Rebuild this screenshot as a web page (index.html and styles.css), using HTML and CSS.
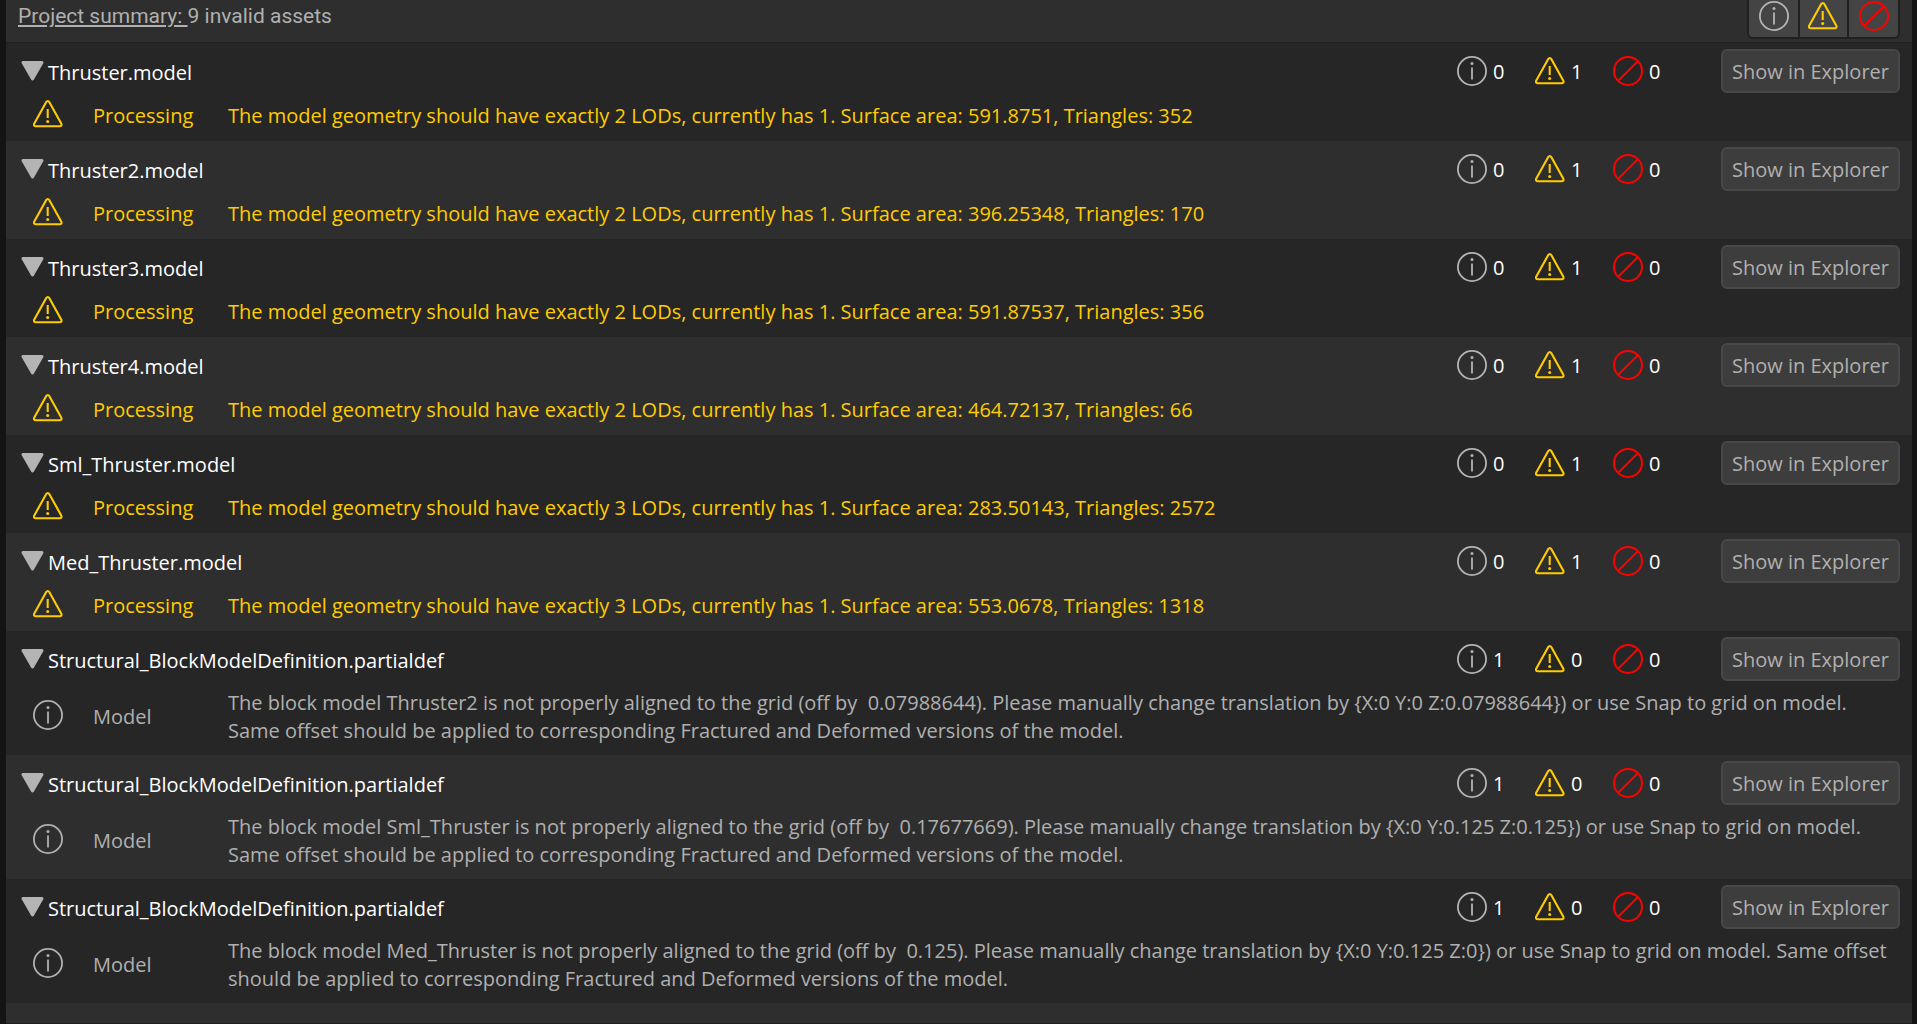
FILE: index.html
```html
<!DOCTYPE html>
<html lang="en">
<head>
<meta charset="utf-8">
<title>Project summary</title>
<link rel="stylesheet" href="styles.css">
</head>
<body>
<svg class="sprite" aria-hidden="true">
  <symbol id="info" viewBox="0 0 30 30">
    <circle cx="15" cy="15" r="14.1" fill="none" stroke="currentColor" stroke-width="1.8"/>
    <circle cx="15" cy="7.5" r="1.5" fill="currentColor"/>
    <path d="M15 11.5v12" fill="none" stroke="currentColor" stroke-width="1.8"/>
  </symbol>
  <symbol id="warn" viewBox="0 0 30 30">
    <path d="M13.1 3.2 1.3 24.4q-1.2 2.8 1.7 2.8h23.5q2.9 0 1.7-2.8L16.4 3.2q-1.6-2.3-3.3 0z" fill="none" stroke="currentColor" stroke-width="2.1" stroke-linejoin="round"/>
    <path d="M14.7 10v9" fill="none" stroke="currentColor" stroke-width="2.1"/>
    <circle cx="14.7" cy="22.5" r="1.5" fill="currentColor"/>
  </symbol>
  <symbol id="ban" viewBox="0 0 30 30">
    <circle cx="15" cy="15" r="14" fill="none" stroke="currentColor" stroke-width="2"/>
    <path d="M5 25 25 5" fill="none" stroke="currentColor" stroke-width="2"/>
  </symbol>
  <symbol id="caret" viewBox="0 0 23 20">
    <path d="M2 1.5h19L11.5 18z" fill="currentColor" stroke="currentColor" stroke-width="3" stroke-linejoin="round"/>
  </symbol>
</svg>
<main class="panel">
  <header class="summary">
    <h1 class="summary-text"><u>Project summary: </u>9 invalid assets</h1>
    <div class="filters">
      <button class="filter info" type="button" aria-label="Show information"><svg class="icon"><use href="#info"/></svg></button>
      <button class="filter warn" type="button" aria-label="Show warnings"><svg class="icon"><use href="#warn"/></svg></button>
      <button class="filter ban" type="button" aria-label="Show errors"><svg class="icon"><use href="#ban"/></svg></button>
    </div>
  </header>

  <section class="asset">
    <div class="asset-head">
      <button class="toggle" type="button" aria-expanded="true"><svg class="caret"><use href="#caret"/></svg>Thruster.model</button>
      <div class="counts">
        <span class="count"><svg class="icon info"><use href="#info"/></svg><span class="number">0</span></span>
        <span class="count"><svg class="icon warn"><use href="#warn"/></svg><span class="number">1</span></span>
        <span class="count"><svg class="icon ban"><use href="#ban"/></svg><span class="number">0</span></span>
      </div>
      <button class="explore" type="button">Show in Explorer</button>
    </div>
    <div class="issue warn">
      <svg class="icon"><use href="#warn"/></svg>
      <span class="kind">Processing</span>
      <p class="message">The model geometry should have exactly 2 LODs, currently has 1. Surface area: 591.8751, Triangles: 352</p>
    </div>
  </section>

  <section class="asset">
    <div class="asset-head">
      <button class="toggle" type="button" aria-expanded="true"><svg class="caret"><use href="#caret"/></svg>Thruster2.model</button>
      <div class="counts">
        <span class="count"><svg class="icon info"><use href="#info"/></svg><span class="number">0</span></span>
        <span class="count"><svg class="icon warn"><use href="#warn"/></svg><span class="number">1</span></span>
        <span class="count"><svg class="icon ban"><use href="#ban"/></svg><span class="number">0</span></span>
      </div>
      <button class="explore" type="button">Show in Explorer</button>
    </div>
    <div class="issue warn">
      <svg class="icon"><use href="#warn"/></svg>
      <span class="kind">Processing</span>
      <p class="message">The model geometry should have exactly 2 LODs, currently has 1. Surface area: 396.25348, Triangles: 170</p>
    </div>
  </section>

  <section class="asset">
    <div class="asset-head">
      <button class="toggle" type="button" aria-expanded="true"><svg class="caret"><use href="#caret"/></svg>Thruster3.model</button>
      <div class="counts">
        <span class="count"><svg class="icon info"><use href="#info"/></svg><span class="number">0</span></span>
        <span class="count"><svg class="icon warn"><use href="#warn"/></svg><span class="number">1</span></span>
        <span class="count"><svg class="icon ban"><use href="#ban"/></svg><span class="number">0</span></span>
      </div>
      <button class="explore" type="button">Show in Explorer</button>
    </div>
    <div class="issue warn">
      <svg class="icon"><use href="#warn"/></svg>
      <span class="kind">Processing</span>
      <p class="message">The model geometry should have exactly 2 LODs, currently has 1. Surface area: 591.87537, Triangles: 356</p>
    </div>
  </section>

  <section class="asset">
    <div class="asset-head">
      <button class="toggle" type="button" aria-expanded="true"><svg class="caret"><use href="#caret"/></svg>Thruster4.model</button>
      <div class="counts">
        <span class="count"><svg class="icon info"><use href="#info"/></svg><span class="number">0</span></span>
        <span class="count"><svg class="icon warn"><use href="#warn"/></svg><span class="number">1</span></span>
        <span class="count"><svg class="icon ban"><use href="#ban"/></svg><span class="number">0</span></span>
      </div>
      <button class="explore" type="button">Show in Explorer</button>
    </div>
    <div class="issue warn">
      <svg class="icon"><use href="#warn"/></svg>
      <span class="kind">Processing</span>
      <p class="message">The model geometry should have exactly 2 LODs, currently has 1. Surface area: 464.72137, Triangles: 66</p>
    </div>
  </section>

  <section class="asset">
    <div class="asset-head">
      <button class="toggle" type="button" aria-expanded="true"><svg class="caret"><use href="#caret"/></svg>Sml_Thruster.model</button>
      <div class="counts">
        <span class="count"><svg class="icon info"><use href="#info"/></svg><span class="number">0</span></span>
        <span class="count"><svg class="icon warn"><use href="#warn"/></svg><span class="number">1</span></span>
        <span class="count"><svg class="icon ban"><use href="#ban"/></svg><span class="number">0</span></span>
      </div>
      <button class="explore" type="button">Show in Explorer</button>
    </div>
    <div class="issue warn">
      <svg class="icon"><use href="#warn"/></svg>
      <span class="kind">Processing</span>
      <p class="message">The model geometry should have exactly 3 LODs, currently has 1. Surface area: 283.50143, Triangles: 2572</p>
    </div>
  </section>

  <section class="asset">
    <div class="asset-head">
      <button class="toggle" type="button" aria-expanded="true"><svg class="caret"><use href="#caret"/></svg>Med_Thruster.model</button>
      <div class="counts">
        <span class="count"><svg class="icon info"><use href="#info"/></svg><span class="number">0</span></span>
        <span class="count"><svg class="icon warn"><use href="#warn"/></svg><span class="number">1</span></span>
        <span class="count"><svg class="icon ban"><use href="#ban"/></svg><span class="number">0</span></span>
      </div>
      <button class="explore" type="button">Show in Explorer</button>
    </div>
    <div class="issue warn">
      <svg class="icon"><use href="#warn"/></svg>
      <span class="kind">Processing</span>
      <p class="message">The model geometry should have exactly 3 LODs, currently has 1. Surface area: 553.0678, Triangles: 1318</p>
    </div>
  </section>

  <section class="asset">
    <div class="asset-head">
      <button class="toggle" type="button" aria-expanded="true"><svg class="caret"><use href="#caret"/></svg>Structural_BlockModelDefinition.partialdef</button>
      <div class="counts">
        <span class="count"><svg class="icon info"><use href="#info"/></svg><span class="number">1</span></span>
        <span class="count"><svg class="icon warn"><use href="#warn"/></svg><span class="number">0</span></span>
        <span class="count"><svg class="icon ban"><use href="#ban"/></svg><span class="number">0</span></span>
      </div>
      <button class="explore" type="button">Show in Explorer</button>
    </div>
    <div class="issue info">
      <svg class="icon"><use href="#info"/></svg>
      <span class="kind">Model</span>
      <p class="message">The block model Thruster2 is not properly aligned to the grid (off by &nbsp;0.07988644). Please manually change translation by {X:0 Y:0 Z:0.07988644}) or use Snap to grid on model.<br>Same offset should be applied to corresponding Fractured and Deformed versions of the model.</p>
    </div>
  </section>

  <section class="asset">
    <div class="asset-head">
      <button class="toggle" type="button" aria-expanded="true"><svg class="caret"><use href="#caret"/></svg>Structural_BlockModelDefinition.partialdef</button>
      <div class="counts">
        <span class="count"><svg class="icon info"><use href="#info"/></svg><span class="number">1</span></span>
        <span class="count"><svg class="icon warn"><use href="#warn"/></svg><span class="number">0</span></span>
        <span class="count"><svg class="icon ban"><use href="#ban"/></svg><span class="number">0</span></span>
      </div>
      <button class="explore" type="button">Show in Explorer</button>
    </div>
    <div class="issue info">
      <svg class="icon"><use href="#info"/></svg>
      <span class="kind">Model</span>
      <p class="message">The block model Sml_Thruster is not properly aligned to the grid (off by &nbsp;0.17677669). Please manually change translation by {X:0 Y:0.125 Z:0.125}) or use Snap to grid on model.<br>Same offset should be applied to corresponding Fractured and Deformed versions of the model.</p>
    </div>
  </section>

  <section class="asset">
    <div class="asset-head">
      <button class="toggle" type="button" aria-expanded="true"><svg class="caret"><use href="#caret"/></svg>Structural_BlockModelDefinition.partialdef</button>
      <div class="counts">
        <span class="count"><svg class="icon info"><use href="#info"/></svg><span class="number">1</span></span>
        <span class="count"><svg class="icon warn"><use href="#warn"/></svg><span class="number">0</span></span>
        <span class="count"><svg class="icon ban"><use href="#ban"/></svg><span class="number">0</span></span>
      </div>
      <button class="explore" type="button">Show in Explorer</button>
    </div>
    <div class="issue info">
      <svg class="icon"><use href="#info"/></svg>
      <span class="kind">Model</span>
      <p class="message">The block model Med_Thruster is not properly aligned to the grid (off by &nbsp;0.125). Please manually change translation by {X:0 Y:0.125 Z:0}) or use Snap to grid on model. Same offset<br>should be applied to corresponding Fractured and Deformed versions of the model.</p>
    </div>
  </section>
</main>
</body>
</html>
```
FILE: styles.css
```css
* {
  box-sizing: border-box;
}

body {
  margin: 0;
  padding: 0 5px 0 6px;
  background: #141414;
  color: #b0b0b0;
  font: 20px/28px "Segoe UI", "Open Sans", "Noto Sans", sans-serif;
}

button {
  font: inherit;
  cursor: pointer;
}

.sprite {
  display: none;
}

.panel {
  min-height: 100vh;
  background: #2e2e2e;
  border-bottom: 1px solid #221e20;
}

.info {
  color: #b4b4b4;
}

.warn {
  color: #ffcc00;
}

.ban {
  color: #ff0000;
}

.icon {
  display: block;
  flex: none;
  width: 30px;
  height: 30px;
}

/* Summary bar */
.summary {
  display: flex;
  justify-content: space-between;
  height: 43px;
  padding: 0 12px;
  border-bottom: 1px solid #212121;
}

.summary-text {
  margin: 0;
  padding-top: 2px;
  font: 21px/28px Roboto, sans-serif;
  white-space: pre;
}

.summary-text u {
  text-decoration-thickness: 2px;
  text-underline-offset: 2px;
}

.filters {
  display: flex;
  gap: 2px;
  height: 39px;
  padding: 0 2px 2px;
  background: #202020;
  border-radius: 0 0 6px 6px;
}

.filter {
  width: 49px;
  padding: 1px 9px 6px 10px;
  background: #444444;
  border: 0;
}

.filter.warn {
  width: 47px;
  padding-left: 8px;
}

.filter:first-child {
  border-bottom-left-radius: 4px;
}

.filter:last-child {
  border-bottom-right-radius: 4px;
}

/* Assets */
.asset {
  padding: 6px 0 12px;
}

.asset:nth-of-type(odd) {
  background: #262626;
}

.asset-head {
  display: flex;
  align-items: center;
  padding: 0 12px 0 15px;
}

.toggle {
  display: flex;
  align-items: center;
  gap: 4px;
  padding: 4px 0 0;
  background: none;
  border: 0;
  color: #ffffff;
}

.caret {
  width: 23px;
  height: 20px;
  margin-bottom: 4px;
  color: #b4b4b4;
}

.counts {
  display: flex;
  margin-left: auto;
  padding-right: 30px;
  color: #ffffff;
}

.count {
  display: flex;
  align-items: center;
  gap: 6px;
  width: 78px;
}

.number {
  padding-top: 2px;
}

.explore {
  width: 179px;
  height: 44px;
  padding: 2px 0 0;
  background: #3d3d3d;
  border: 2px solid #484848;
  border-radius: 6px;
  color: #b0b0b0;
}

.issue {
  display: grid;
  grid-template-columns: 30px 105px 1fr;
  column-gap: 30px;
  align-items: center;
  min-height: 30px;
  margin-top: 6px;
  padding-left: 27px;
}

.issue.info {
  color: #b0b0b0;
}

/* Text sits slightly below the icons' centre line without growing the row */
.kind,
.message {
  margin: 0 0 -2px;
  padding-top: 2px;
}
```
